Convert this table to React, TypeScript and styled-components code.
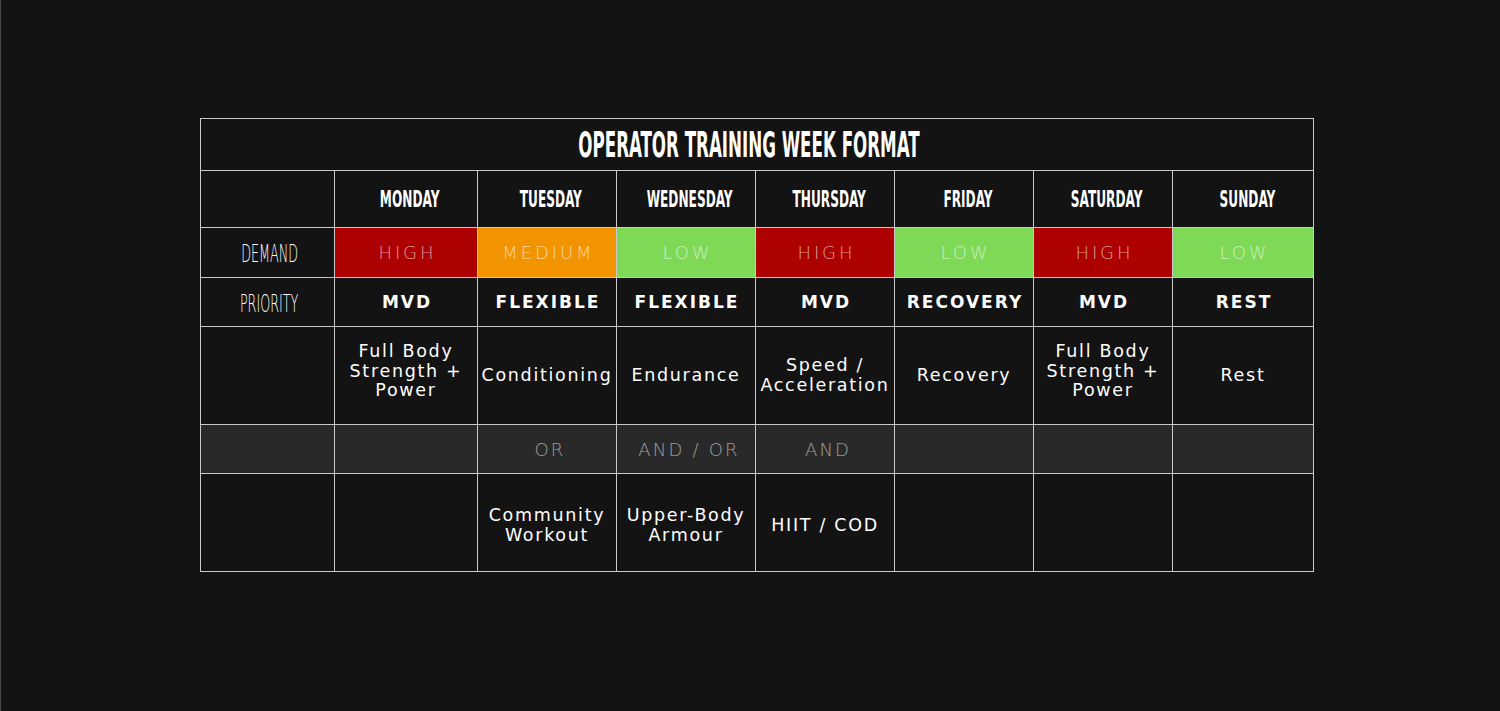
import React, { ReactElement } from 'react';
import styled, { createGlobalStyle } from 'styled-components';

const LINE = '#c9c9c9';
const CELL_BG = '#131313';
const JOIN_BG = '#292929';

const DEMAND_COLORS: Record<string, string> = {
    HIGH: '#ad0000',
    MEDIUM: '#f29400',
    LOW: '#7ed957',
};

type DayType = {
    name: string;
    demand: 'HIGH' | 'MEDIUM' | 'LOW';
    priority: string;
    main: string[];
    join: string;
    extra: string[];
};

const DAYS: DayType[] = [
    { name: 'Monday', demand: 'HIGH', priority: 'MVD', main: ['Full Body', 'Strength +', 'Power'], join: '', extra: [] },
    { name: 'Tuesday', demand: 'MEDIUM', priority: 'FLEXIBLE', main: ['Conditioning'], join: 'OR', extra: ['Community', 'Workout'] },
    { name: 'Wednesday', demand: 'LOW', priority: 'FLEXIBLE', main: ['Endurance'], join: 'AND / OR', extra: ['Upper-Body', 'Armour'] },
    { name: 'Thursday', demand: 'HIGH', priority: 'MVD', main: ['Speed /', 'Acceleration'], join: 'AND', extra: ['HIIT / COD'] },
    { name: 'Friday', demand: 'LOW', priority: 'RECOVERY', main: ['Recovery'], join: '', extra: [] },
    { name: 'Saturday', demand: 'HIGH', priority: 'MVD', main: ['Full Body', 'Strength +', 'Power'], join: '', extra: [] },
    { name: 'Sunday', demand: 'LOW', priority: 'REST', main: ['Rest'], join: '', extra: [] },
];

const GlobalStyle = createGlobalStyle`
    html, body {
        margin: 0;
        padding: 0;
        background: ${CELL_BG};
    }
`;

export default function App(): ReactElement {
    return (
        <>
            <GlobalStyle />
            <Page>
                <Schedule>
                    <TitleCell>
                        <Title $scale={0.53}>OPERATOR TRAINING WEEK FORMAT</Title>
                    </TitleCell>

                    <Cell />
                    {DAYS.map((day) => (
                        <Cell key={`h-${day.name}`}>
                            <DayName $scale={0.6}>{day.name.toUpperCase()}</DayName>
                        </Cell>
                    ))}

                    <Cell>
                        <RowLabel $scale={0.53}>DEMAND</RowLabel>
                    </Cell>
                    {DAYS.map((day) => (
                        <DemandCell key={`d-${day.name}`} $bg={DEMAND_COLORS[day.demand]}>
                            <Faint>{day.demand}</Faint>
                        </DemandCell>
                    ))}

                    <Cell>
                        <RowLabel $scale={0.53}>PRIORITY</RowLabel>
                    </Cell>
                    {DAYS.map((day) => (
                        <Cell key={`p-${day.name}`}>
                            <Priority>{day.priority}</Priority>
                        </Cell>
                    ))}

                    <Cell />
                    {DAYS.map((day) => (
                        <Cell key={`m-${day.name}`}>
                            <Session $shift={day.main.length > 2 ? -4 : 0}>
                                {day.main.map((line) => (
                                    <span key={line}>{line}</span>
                                ))}
                            </Session>
                        </Cell>
                    ))}

                    <JoinCell />
                    {DAYS.map((day) => (
                        <JoinCell key={`j-${day.name}`}>
                            <Faint $dim>{day.join}</Faint>
                        </JoinCell>
                    ))}

                    <Cell />
                    {DAYS.map((day) => (
                        <Cell key={`e-${day.name}`}>
                            <Session $shift={3}>
                                {day.extra.map((line) => (
                                    <span key={line}>{line}</span>
                                ))}
                            </Session>
                        </Cell>
                    ))}
                </Schedule>
            </Page>
        </>
    );
}

const Page = styled.main`
    box-sizing: border-box;
    width: 1500px;
    height: 711px;
    padding: 118px 0 0 199px;
    border-left: 1px solid #4a4a4a;
    background: ${CELL_BG};
`;

const Schedule = styled.section`
    display: grid;
    grid-template-columns: 133px 142px 138px 138px 138px 138px 138px 140px;
    grid-template-rows: 51px 56px 49px 48px 97px 48px 97px;
    gap: 1px;
    padding: 1px;
    width: max-content;
    background: ${LINE};
`;

const Cell = styled.div`
    display: flex;
    align-items: center;
    justify-content: center;
    background: ${CELL_BG};
    color: #ffffff;
    text-align: center;
    overflow: hidden;
`;

const TitleCell = styled(Cell)`
    grid-column: 1 / -1;
`;

const DemandCell = styled(Cell)<{ $bg: string }>`
    background: ${(p) => p.$bg};
`;

const JoinCell = styled(Cell)`
    background: ${JOIN_BG};
`;

const Condensed = styled.span<{ $scale: number }>`
    display: inline-block;
    white-space: nowrap;
    font-family: 'DejaVu Sans Condensed', 'DejaVu Sans', sans-serif;
    font-stretch: condensed;
    font-weight: 700;
    font-size: 34px;
    line-height: 1;
    transform: scaleX(${(p) => p.$scale});
`;

const Title = styled(Condensed)`
    font-size: 35px;
    margin: 2px 17px 0 0;
`;

const DayName = styled(Condensed)`
    font-size: 22.5px;
    margin: 1px 0 0 8px;
`;

const RowLabel = styled(Condensed)`
    font-family: 'DejaVu Sans', sans-serif;
    font-stretch: normal;
    font-weight: 200;
    font-size: 24px;
    margin: 3px 0 0 4px;
`;

const Faint = styled.span<{ $dim?: boolean }>`
    font-family: 'DejaVu Sans', sans-serif;
    font-weight: 200;
    font-size: 18px;
    letter-spacing: ${(p) => (p.$dim ? '2.2px' : '2.9px')};
    margin: ${(p) => (p.$dim ? '0 0 0 6px' : '0 -2.9px 0 0')};
    color: ${(p) => (p.$dim ? 'rgba(255, 255, 255, 0.55)' : 'rgba(255, 255, 255, 0.6)')};
    white-space: nowrap;
`;

const Priority = styled.span`
    font-family: 'DejaVu Sans', sans-serif;
    font-weight: 700;
    font-size: 17px;
    letter-spacing: 2px;
    margin-right: -2px;
    white-space: nowrap;
`;

const Session = styled.div<{ $shift: number }>`
    display: flex;
    flex-direction: column;
    align-items: center;
    margin-top: ${(p) => p.$shift * 2}px;
    font-family: 'DejaVu Sans', sans-serif;
    font-size: 17.5px;
    letter-spacing: 1.7px;
    line-height: 19.5px;
    white-space: nowrap;
`;
